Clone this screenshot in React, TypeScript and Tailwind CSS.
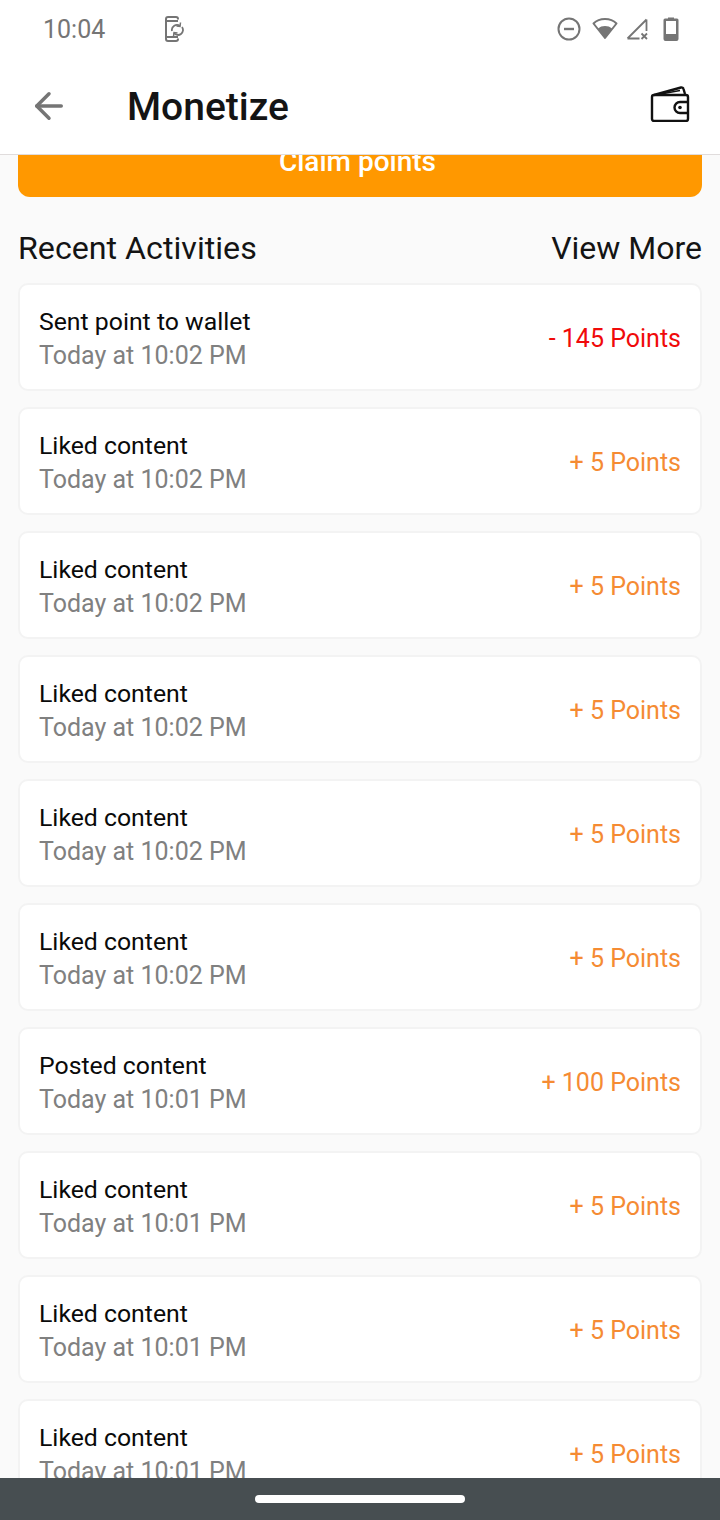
import { ArrowLeft } from "lucide-react";

interface Activity {
    title: string;
    time: string;
    points: string;
    negative?: boolean;
}

const activities: Activity[] = [
    { title: "Sent point to wallet", time: "Today at 10:02 PM", points: "- 145 Points", negative: true },
    { title: "Liked content", time: "Today at 10:02 PM", points: "+ 5 Points" },
    { title: "Liked content", time: "Today at 10:02 PM", points: "+ 5 Points" },
    { title: "Liked content", time: "Today at 10:02 PM", points: "+ 5 Points" },
    { title: "Liked content", time: "Today at 10:02 PM", points: "+ 5 Points" },
    { title: "Liked content", time: "Today at 10:02 PM", points: "+ 5 Points" },
    { title: "Posted content", time: "Today at 10:01 PM", points: "+ 100 Points" },
    { title: "Liked content", time: "Today at 10:01 PM", points: "+ 5 Points" },
    { title: "Liked content", time: "Today at 10:01 PM", points: "+ 5 Points" },
    { title: "Liked content", time: "Today at 10:01 PM", points: "+ 5 Points" },
];

const StatusIcons = () => (
    <div className="flex items-center text-[#757575]">
        {/* do not disturb */}
        <svg width="24" height="24" viewBox="0 0 24 24" fill="none" stroke="currentColor" strokeWidth="2">
            <circle cx="12" cy="12" r="10.500" />
            <path d="M7 12h10" strokeWidth="2.400" />
        </svg>
        {/* wifi */}
        <svg width="26" height="24" viewBox="0 0 26 24" className="ml-[11px]">
            <path d="M13 21 1.500 6.500C4.500 3.500 8.500 2 13 2s8.500 1.500 11.500 4.500Z" fill="none" stroke="currentColor" strokeWidth="2" strokeLinejoin="round" />
            <path d="M13 21 6 11.500C8 9.800 10.300 9 13 9s5 .8 7 2.500Z" fill="currentColor" />
        </svg>
        {/* signal, no sim */}
        <svg width="22" height="24" viewBox="0 0 22 24" fill="none" stroke="currentColor" className="ml-[8px]">
            <path d="M20.500 2.500V14M1.500 21.500 20.500 2.500M1.500 21.500h12" strokeWidth="1.800" />
            <path d="m15.500 16.500 5.500 5.500m0-5.500-5.500 5.500" strokeWidth="1.800" />
        </svg>
        {/* battery */}
        <svg width="16" height="24" viewBox="0 0 16 24" className="ml-[15px]">
            <path d="M5 1.500V.5h6v1h3a1.500 1.500 0 0 1 1.500 1.500V22a2 2 0 0 1-2 2h-11a2 2 0 0 1-2-2V3A1.500 1.500 0 0 1 2 1.500Z" fill="currentColor" />
            <rect x="3" y="4" width="10" height="13" fill="white" />
        </svg>
    </div>
);

const SyncPhoneIcon = () => (
    <svg width="20" height="26" viewBox="0 0 20 26" fill="none" stroke="#757575" strokeWidth="2">
        <path d="M14 3.500V3a2 2 0 0 0-2-2H4a2 2 0 0 0-2 2v20a2 2 0 0 0 2 2h8a2 2 0 0 0 2-2v-.5" />
        <path d="M2 5h12M2 21h12" />
        <path d="M8 15a5 5 0 0 1 8-5M18 11a5 5 0 0 1-8 6" strokeWidth="1.800" />
        <path d="m16.500 6.500-.5 4-3.500-.5M9.500 20.500l.5-4 3.500.5" strokeWidth="1.500" />
    </svg>
);

const WalletIcon = () => (
    <svg width="40" height="36" viewBox="0 0 40 36" fill="none" stroke="#111" strokeWidth="2.400" strokeLinejoin="round">
        <path d="M4 9 31 1.500a2 2 0 0 1 2.500 1.500L35 8" />
        <path d="M11 8 30 4.500" strokeWidth="1.500" />
        <path d="M2 11a2 2 0 0 1 2-2h32a2 2 0 0 1 2 2v22a2 2 0 0 1-2 2H4a2 2 0 0 1-2-2Z" />
        <path d="M38 16h-8a5 5 0 0 0 0 11h8" />
        <circle cx="30" cy="21.500" r="1.800" fill="#111" stroke="none" />
    </svg>
);

const ActivityCard = ({ title, time, points, negative }: Activity) => (
    <div className="flex h-[108px] shrink-0 items-center justify-between rounded-[10px] border-2 border-[#f3f3f3] bg-white px-[19px] pt-1">
        <div className="flex flex-col">
            <span className="text-[24.800px] leading-[34px] text-[#0a0a0a]">{title}</span>
            <span className="text-[25px] leading-[34px] text-[#808080]">{time}</span>
        </div>
        <span className={`text-[25px] leading-[34px] ${negative ? "text-[#f00a0a]" : "text-[#f58b33]"}`}>{points}</span>
    </div>
);

export default function App() {
    return (
        <div className="relative flex h-[1520px] w-[720px] flex-col overflow-hidden bg-[#fafafa] font-['Roboto',sans-serif]">
            {/* Status bar + toolbar */}
            <div className="z-10 shrink-0 border-b border-[#e0dcdc] bg-white">
                <div className="flex h-[58px] items-center justify-between pl-[43px] pr-[41px]">
                    <div className="flex items-center">
                        <span className="mt-[2px] text-[25px] text-[#757575]">10:04</span>
                        <div className="ml-[59px]">
                            <SyncPhoneIcon />
                        </div>
                    </div>
                    <StatusIcons />
                </div>
                <div className="flex h-[96px] items-center justify-between pl-[28px] pr-[30px]">
                    <div className="flex items-center">
                        <ArrowLeft size={42} color="#757575" strokeWidth={2} />
                        <h1 className="ml-[57px] mt-[2px] text-[39px] font-medium text-[#141414]">Monetize</h1>
                    </div>
                    <div className="mb-1">
                        <WalletIcon />
                    </div>
                </div>
            </div>

            <div className="flex min-h-0 flex-1 flex-col px-[18px]">
                <button className="-mt-[28px] h-[70px] w-full shrink-0 rounded-[12px] bg-[#ff9800] pr-[5px] text-[28px] font-medium text-white">
                    Claim points
                </button>
                <div className="mt-[30px] flex items-center justify-between">
                    <span className="text-[32.200px] leading-[42px] text-[#141414]">Recent Activities</span>
                    <span className="text-[32px] leading-[42px] text-[#141414]">View More</span>
                </div>
                <div className="mt-[14px] flex flex-col gap-4">
                    {activities.map((a, i) => (
                        <ActivityCard key={i} {...a} />
                    ))}
                </div>
            </div>

            {/* Navigation bar */}
            <div className="absolute inset-x-0 bottom-0 flex h-[42px] items-center justify-center bg-[#474e51]">
                <div className="h-2 w-[210px] rounded-full bg-white" />
            </div>
        </div>
    );
}
